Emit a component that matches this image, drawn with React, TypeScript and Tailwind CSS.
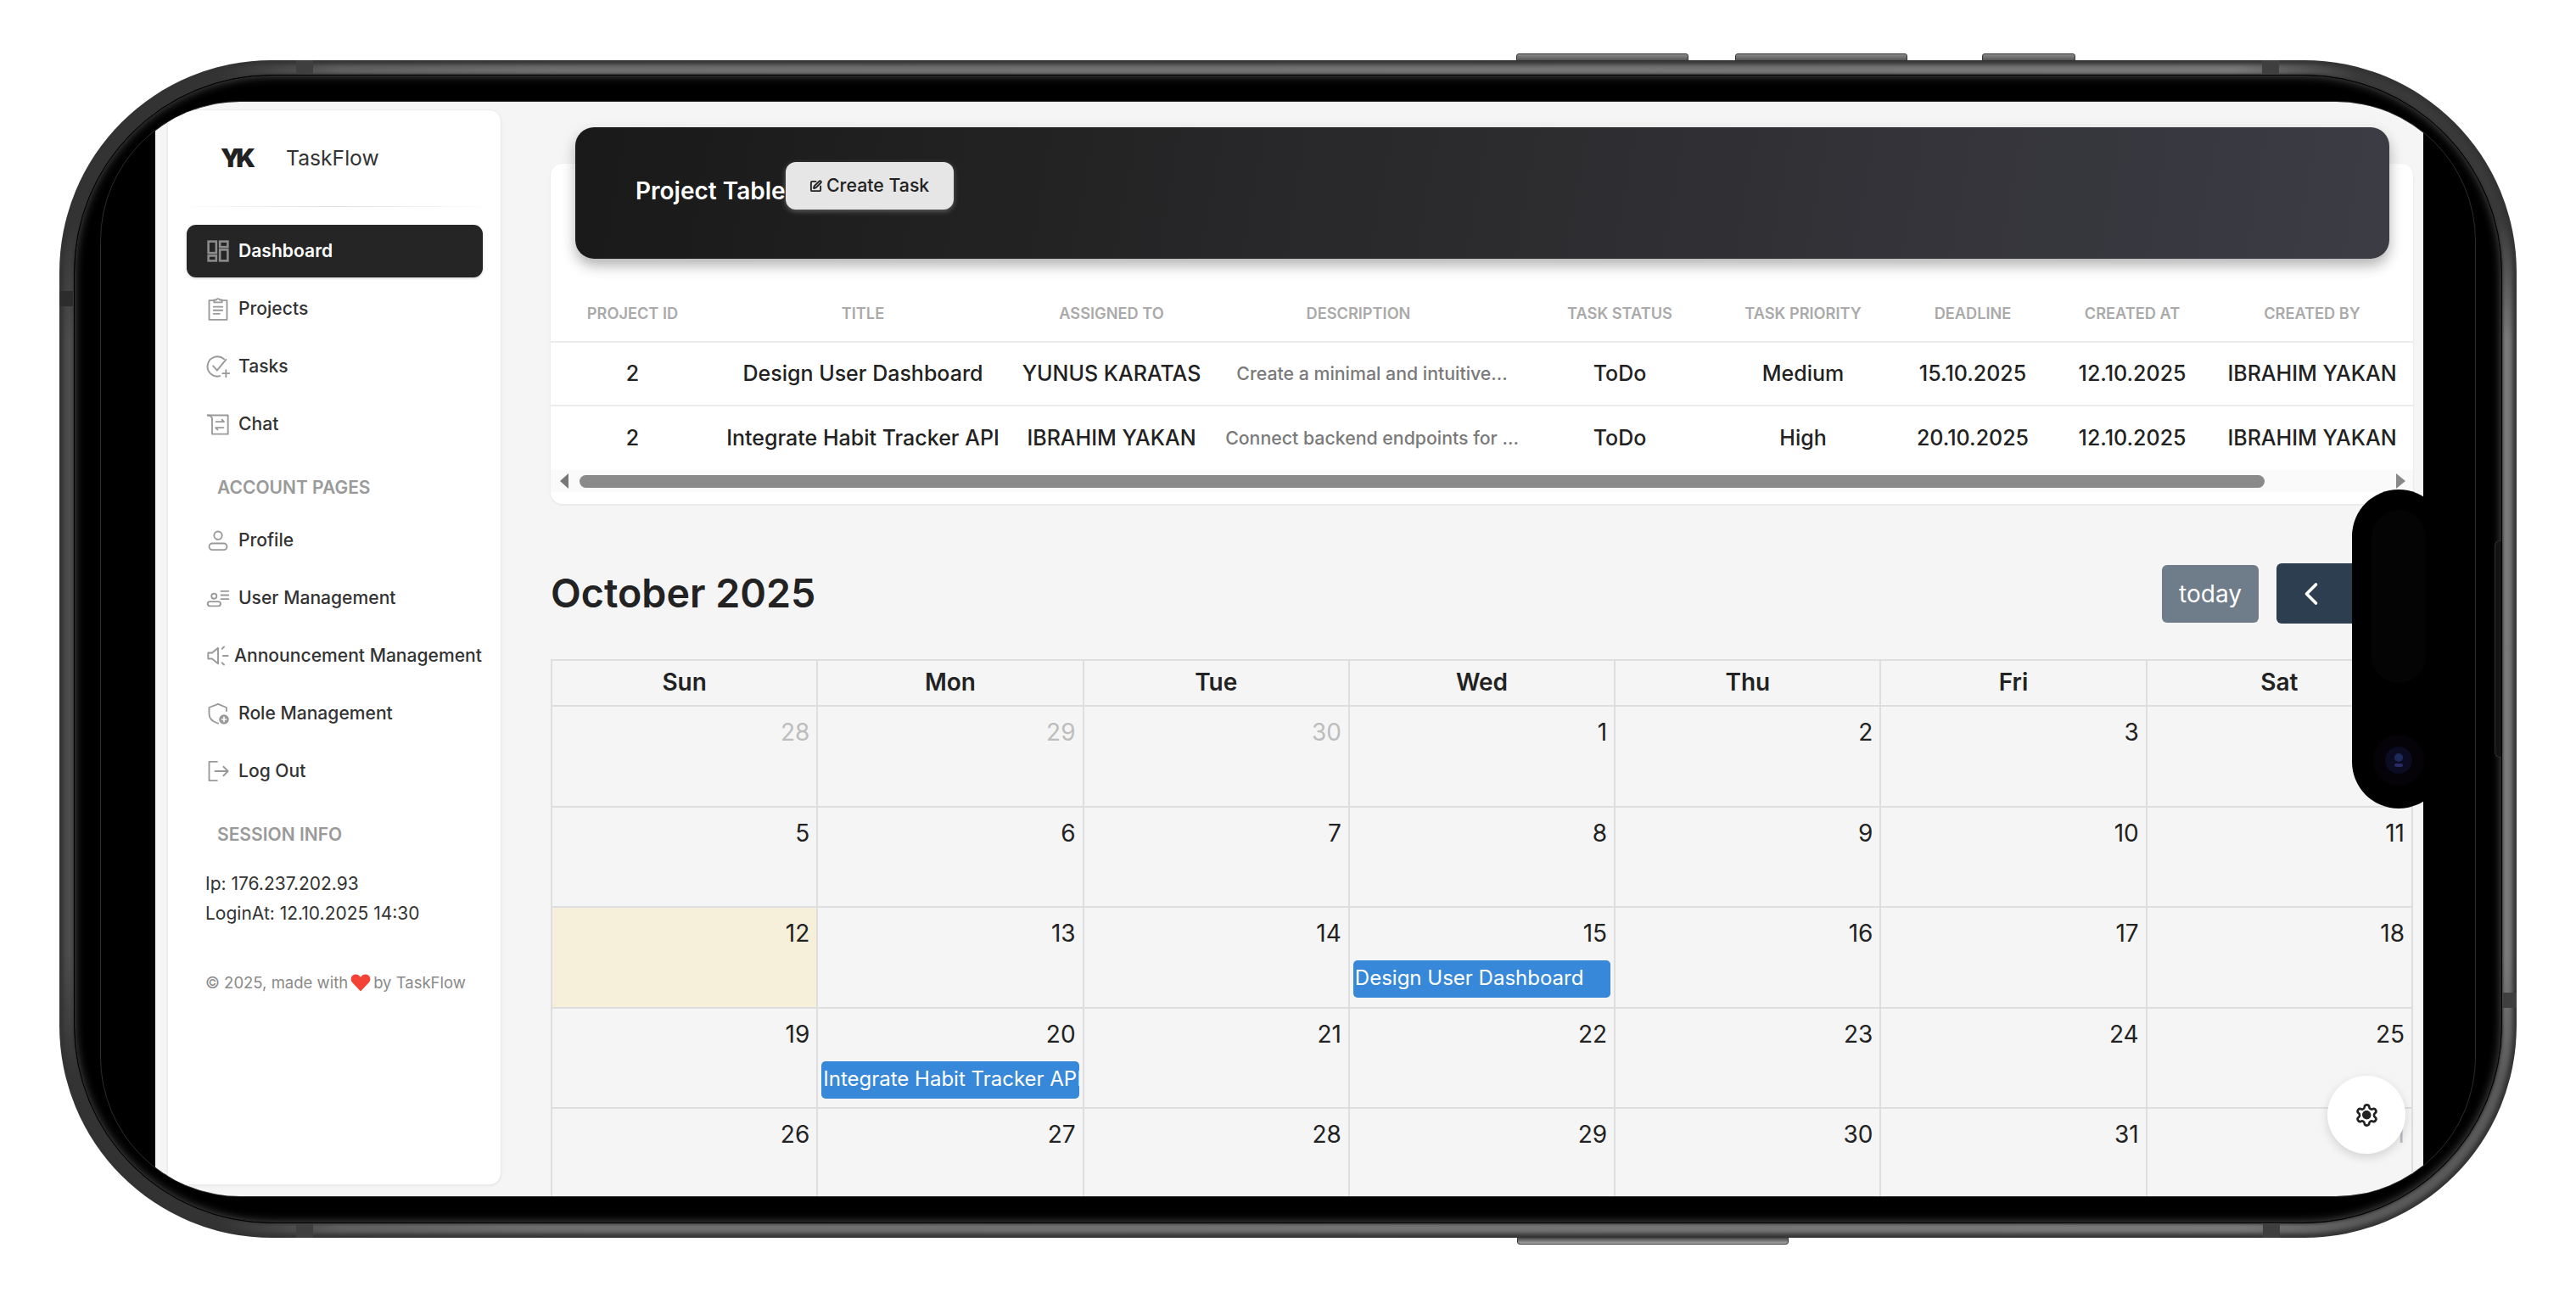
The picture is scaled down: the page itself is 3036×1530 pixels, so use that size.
import { Settings, SquarePen, ChevronLeft, ChevronRight } from "lucide-react";

const navTop = [
  { label: "Projects", icon: <ProjectsIcon /> },
  { label: "Tasks", icon: <TasksIcon /> },
  { label: "Chat", icon: <ChatIcon /> },
];

const navAccount = [
  { label: "Profile", icon: <ProfileIcon /> },
  { label: "User Management", icon: <UsersIcon /> },
  { label: "Announcement Management", icon: <MegaphoneIcon />, tight: true },
  { label: "Role Management", icon: <ShieldIcon /> },
  { label: "Log Out", icon: <LogOutIcon /> },
];

const columns = ["PROJECT ID", "TITLE", "ASSIGNED TO", "DESCRIPTION", "TASK STATUS", "TASK PRIORITY", "DEADLINE", "CREATED AT", "CREATED BY"];

const rows = [
  ["2", "Design User Dashboard", "YUNUS KARATAS", "Create a minimal and intuitive...", "ToDo", "Medium", "15.10.2025", "12.10.2025", "IBRAHIM YAKAN"],
  ["2", "Integrate Habit Tracker API", "IBRAHIM YAKAN", "Connect backend endpoints for ...", "ToDo", "High", "20.10.2025", "12.10.2025", "IBRAHIM YAKAN"],
];

const weekDays = ["Sun", "Mon", "Tue", "Wed", "Thu", "Fri", "Sat"];

const days = [
  28, 29, 30, 1, 2, 3, 4,
  5, 6, 7, 8, 9, 10, 11,
  12, 13, 14, 15, 16, 17, 18,
  19, 20, 21, 22, 23, 24, 25,
  26, 27, 28, 29, 30, 31, 1,
];

const events: Record<number, string> = {
  17: "Design User Dashboard",
  22: "Integrate Habit Tracker API",
};

function Svg({ children }: any) {
  return (
    <svg viewBox="0 0 24 24" fill="none" stroke="currentColor" strokeWidth="1.6" strokeLinecap="round" strokeLinejoin="round" className="w-[28px] h-[28px]">
      {children}
    </svg>
  );
}

function DashboardIcon() {
  return (
    <svg viewBox="0 0 24 24" fill="none" stroke="currentColor" strokeWidth="2.400" className="w-[26px] h-[26px]">
      <rect x="1.5" y="1.5" width="8.500" height="12.500" />
      <rect x="14" y="1.5" width="8.500" height="6" />
      <rect x="1.5" y="17" width="8.500" height="5.500" />
      <rect x="14" y="10.5" width="8.500" height="12" />
    </svg>
  );
}

function ProjectsIcon() {
  return (
    <Svg>
      <path d="M8 3.500H3v19.500h18V3.500H16" />
      <path d="M8 5.500V3h2.200a2 2 0 0 1 3.600 0H16v2.500z" />
      <path d="M7.500 10h9M7.500 13.500h9M7.500 17h6" />
    </Svg>
  );
}

function TasksIcon() {
  return (
    <Svg>
      <path d="M18 4.500A10 10 0 1 0 14 21.600" />
      <path d="M7 11.500l4 4.500 9-11" />
      <path d="M20 15.500v7M16.500 19h7" />
    </Svg>
  );
}

function ChatIcon() {
  return (
    <Svg>
      <path d="M1.500 3h20.500v19H6V6.500" />
      <path d="M1.500 3c2 0 4 1 4.500 3.500" />
      <path d="M10 9.500h8l-2-2M17.500 15.500h-8l2 2" />
    </Svg>
  );
}

function ProfileIcon() {
  return (
    <Svg>
      <circle cx="12" cy="7" r="4" />
      <rect x="3" y="15" width="18" height="6.500" rx="3.250" />
    </Svg>
  );
}

function UsersIcon() {
  return (
    <Svg>
      <circle cx="8" cy="10" r="2.600" />
      <rect x="1.500" y="15.500" width="13" height="4.500" rx="2.200" />
      <path d="M15 5h7.500M15 9h7.500M15 13h7.500" />
    </Svg>
  );
}

function MegaphoneIcon() {
  return (
    <Svg>
      <path d="M2 9v6h4l6 5V4L6 9z" />
      <path d="M16 5l2-2M17 12h5M16 19l2 2" />
    </Svg>
  );
}

function ShieldIcon() {
  return (
    <Svg>
      <path d="M12 2.500L3 6v6.500c0 5 4 8 9 9.500" />
      <path d="M12 2.500L20.500 6v3.500" />
      <circle cx="18" cy="18" r="5" fill="currentColor" stroke="none" />
      <path d="M15.800 18h4.400M18 15.800v4.400" stroke="#fff" strokeWidth="1.400" />
    </Svg>
  );
}

function LogOutIcon() {
  return (
    <Svg>
      <path d="M11 2.500H3v19h8" />
      <path d="M9 12h13M17.500 7.500L22 12l-4.500 4.500" />
    </Svg>
  );
}

function NavItem({ label, icon, tight }: any) {
  return (
    <div className="h-[62px] flex items-center pl-[23px] text-[#333] text-[21.100px] font-medium">
      <span className="text-[#999] w-[28px] shrink-0 flex justify-center">{icon}</span>
      <span className={tight ? "ml-[5px] whitespace-nowrap" : "ml-[10px] whitespace-nowrap"}>{label}</span>
    </div>
  );
}

function Sidebar() {
  return (
    <aside className="w-[394px] h-[1268px] mt-[9px] ml-[14px] shrink-0 bg-white rounded-[14px] border border-[#ebebeb] shadow-[0_1px_3px_rgba(0,0,0,0.06)] flex flex-col">
      <div className="h-[113px] flex items-center pl-[62px] shrink-0">
        <span className="w-[77px] font-black text-[30px] tracking-[-5px] text-[#222]">YK</span>
        <span className="text-[24.700px] text-[#333]">TaskFlow</span>
      </div>
      <div className="h-px mx-[10px] bg-gradient-to-r from-transparent via-[#dedede] to-transparent shrink-0" />
      <nav className="ml-[22px] mr-[21px] mt-[21px]">
        <div className="h-[62px] flex items-center pl-[23px] rounded-[11px] bg-[#252525] text-white text-[21.100px] font-semibold shadow-[0_1px_3px_rgba(0,0,0,0.2)]">
          <span className="text-[#8c8c8c] w-[28px] shrink-0 flex justify-center"><DashboardIcon /></span>
          <span className="ml-[10px]">Dashboard</span>
        </div>
        <div className="flex flex-col gap-[6px] mt-[6px]">
          {navTop.map((item) => (
            <NavItem key={item.label} {...item} />
          ))}
        </div>
        <div className="h-[44px] mt-[22px] pl-[36px] flex items-center text-[21px] font-semibold text-[#9a9a9a]">ACCOUNT PAGES</div>
        <div className="flex flex-col gap-[6px] mt-[9px]">
          {navAccount.map((item) => (
            <NavItem key={item.label} {...item} />
          ))}
        </div>
      </nav>
      <div className="h-[44px] mt-[22px] pl-[58px] flex items-center text-[21px] font-semibold text-[#9a9a9a]">SESSION INFO</div>
      <div className="pl-[44px] mt-[18px] text-[21px] leading-[35px] text-[#333]">
        <p>Ip: 176.237.202.93</p>
        <p>LoginAt: 12.10.2025 14:30</p>
      </div>
      <div className="pl-[44px] mt-[49px] flex items-center text-[18.500px] leading-[30px] text-[#8a8a8a] whitespace-nowrap">
        <span>© 2025, made with</span>
        <svg viewBox="0 0 24 24" className="w-[24px] h-[24px] mx-[3px]" fill="#f44336">
          <path d="M12 22.500L2.300 12.300C-.3 9.500.2 5 3.300 3.200c3-1.700 6.500-.6 8.700 2.500 2.200-3.100 5.700-4.200 8.700-2.500 3.100 1.800 3.600 6.300 1 9.100z" />
        </svg>
        <span>by TaskFlow</span>
      </div>
    </aside>
  );
}

const gridCols = "grid grid-cols-[193px_350px_236px_378px_206px_226px_174px_202px_222px]";

function ProjectTable() {
  return (
    <section className="relative bg-white rounded-[14px] h-[401px] shadow-[0_1px_3px_rgba(0,0,0,0.08)] flex flex-col">
      <div className="relative -mt-[43px] ml-[29px] mr-[28px] h-[155px] shrink-0 rounded-[22px] bg-[linear-gradient(100deg,#191919_0%,#2a2a2c_45%,#3c3c45_100%)] shadow-[0_8px_16px_rgba(0,0,0,0.3)] flex items-start pl-[71px]">
        <h2 className="mt-[60px] text-[28px] leading-[30px] font-semibold text-white whitespace-nowrap">Project Table</h2>
        <button className="mt-[41px] w-[198px] h-[56px] rounded-[12px] bg-[#e6e6e6] text-[#222] text-[21.300px] font-medium flex items-center justify-center gap-[5px] shadow-[0_2px_6px_rgba(255,255,255,0.3)]">
          <SquarePen className="w-[15px] h-[15px]" strokeWidth={3} />
          Create Task
        </button>
      </div>
      <div className={`${gridCols} h-[99px] items-start pt-[52px] border-b-2 border-[#ececec] text-[18.200px] leading-[24px] font-semibold text-[#aaa] text-center`}>
        {columns.map((c) => (
          <div key={c} className={c === "DESCRIPTION" ? "pr-[32px]" : ""}>{c}</div>
        ))}
      </div>
      {rows.map((row, i) => (
        <div key={i} className={`${gridCols} h-[75px] items-center ${i === 0 ? "border-b-2 border-[#ececec]" : ""} text-center text-[25px] font-medium text-[#222]`}>
          {row.map((cell, j) => (
            <div key={j} className={j === 3 ? "text-[21.300px] text-[#7a7a7a] whitespace-nowrap" : "whitespace-nowrap"}>{cell}</div>
          ))}
        </div>
      ))}
      <div className="h-[26px] bg-[#fafafa] flex items-center">
        <span className="ml-[11px] w-0 h-0 border-y-[9px] border-y-transparent border-r-[10px] border-r-[#777]" />
        <span className="ml-[13px] w-[1986px] h-[15px] rounded-full bg-[#8a8a8a]" />
        <span className="ml-auto mr-[9px] w-0 h-0 border-y-[9px] border-y-transparent border-l-[11px] border-l-[#888]" />
      </div>
    </section>
  );
}

function Calendar() {
  return (
    <section className="mt-[70px]">
      <div className="h-[71px] flex items-center justify-between">
        <h2 className="text-[46.600px] font-semibold text-[#222]">October 2025</h2>
        <div className="flex items-center">
          <button className="w-[114px] h-[68px] rounded-[6px] bg-[#6f7d8a] text-white text-[28px]">today</button>
          <div className="ml-[21px] flex rounded-[6px] overflow-hidden bg-[#2c3e50] text-white">
            <button className="w-[81px] h-[71px] flex items-center justify-center"><ChevronLeft className="w-[44px] h-[44px]" strokeWidth={2} /></button>
            <button className="w-[80px] h-[71px] flex items-center justify-center"><ChevronRight className="w-[44px] h-[44px]" strokeWidth={2} /></button>
          </div>
        </div>
      </div>
      <div className="mt-[42px] border-l-2 border-t-2 border-[#dedede]">
        <div className="grid grid-cols-7 h-[54px]">
          {weekDays.map((d) => (
            <div key={d} className="border-r-2 border-b-2 border-[#dedede] flex items-center justify-center pb-[3px] text-[28px] font-semibold text-[#222]">{d}</div>
          ))}
        </div>
        <div className="grid grid-cols-7">
          {days.map((d, i) => (
            <div key={i} className={`h-[118.500px] border-r-2 border-b-2 border-[#dedede] ${i === 14 ? "bg-[#f6f0da]" : ""}`}>
              <div className={`h-[48px] pt-[12px] pr-[8px] text-right text-[28px] leading-[36px] ${i < 3 || i === 34 ? "text-[#bdbdbd]" : "text-[#222]"}`}>{d}</div>
              {events[i] && (
                <div className="mt-[14px] mx-[4px] h-[44px] rounded-[5px] bg-[#3788d8] text-white text-[24px] leading-[42px] px-[2px] overflow-hidden whitespace-nowrap">{events[i]}</div>
              )}
            </div>
          ))}
        </div>
      </div>
    </section>
  );
}

export default function App() {
  return (
    <div className="w-[3036px] h-[1530px] bg-white overflow-hidden pl-[70px] pt-[71px] font-['Inter',sans-serif]">
      {/* phone body */}
      <div className="relative w-[2896px] h-[1388px] rounded-[250px] p-[17px] bg-[radial-gradient(circle_at_0_0,#343434_0,#343434_190px,transparent_330px),radial-gradient(circle_at_0_100%,#343434_0,#343434_190px,transparent_330px),radial-gradient(circle_at_100%_0,#3a3a3a_0,#3a3a3a_190px,transparent_330px),radial-gradient(circle_at_100%_100%,#5a5a5a_0,#5a5a5a_190px,transparent_330px),linear-gradient(90deg,#4c4c4c_0%,#6e6e6e_20%,#7a7a7a_100%)] shadow-[inset_0_0_5px_5px_#333]">
        {/* side buttons */}
        <div className="absolute -top-[8px] left-[1717px] w-[203px] h-[9px] rounded-t-[3px] border border-[#333] bg-[linear-gradient(180deg,#8a8a8a,#555)]" />
        <div className="absolute -top-[8px] left-[1975px] w-[203px] h-[9px] rounded-t-[3px] border border-[#333] bg-[linear-gradient(180deg,#8a8a8a,#555)]" />
        <div className="absolute -top-[8px] left-[2266px] w-[110px] h-[9px] rounded-t-[3px] border border-[#333] bg-[linear-gradient(180deg,#8a8a8a,#555)]" />
        <div className="absolute -bottom-[8px] left-[1718px] w-[320px] h-[9px] rounded-b-[3px] border border-[#333] bg-[linear-gradient(0deg,#aaa,#444)]" />
        {/* antenna bands */}
        <div className="absolute top-0 left-[279px] w-[20px] h-[16px] bg-[#3f3f3f]" />
        <div className="absolute bottom-0 left-[279px] w-[20px] h-[16px] bg-[#3f3f3f]" />
        <div className="absolute top-0 left-[2596px] w-[20px] h-[16px] bg-[#3f3f3f]" />
        <div className="absolute bottom-0 left-[2597px] w-[20px] h-[16px] bg-[#3f3f3f]" />
        <div className="absolute left-0 top-[272px] w-[16px] h-[18px] bg-[#2c2c2c]" />
        <div className="absolute right-0 top-[1099px] w-[16px] h-[18px] bg-[#3f3f3f]" />

        {/* bezel */}
        <div className="w-full h-full rounded-[233px] bg-black p-[30px] border border-black shadow-[0_0_3px_1px_#333,inset_0_0_12px_rgba(100,100,100,0.85)]">
          {/* screen */}
          <div className="w-full h-full rounded-[165px] bg-black border border-[#2c2c2c] overflow-hidden pl-[64px] pr-[61px]">
            <div className="w-full h-full bg-[#f5f5f5] flex overflow-hidden">
              <Sidebar />
              <main className="ml-[58px] w-[2195px] shrink-0 pt-[73px]">
                <ProjectTable />
                <Calendar />
              </main>
            </div>
          </div>
        </div>

        {/* power button edge */}
        <div className="absolute left-[2870px] top-[566px] w-[8px] h-[256px] rounded-l-[6px] border-l border-y border-[#2e2e2e] bg-[#141414]" />

        {/* settings button */}
        <button className="absolute left-[2673px] top-[1197px] w-[92px] h-[92px] rounded-full bg-white shadow-[0_4px_12px_rgba(0,0,0,0.14)] flex items-center justify-center text-[#222]">
          <Settings className="w-[29px] h-[29px]" strokeWidth={2.2} fill="none" />
          <span className="absolute w-[10px] h-[10px] rounded-full bg-[#222]" />
        </button>

        {/* dynamic island */}
        <div className="absolute left-[2702px] top-[506px] w-[110px] h-[376px] rounded-[55px] bg-black">
          <div className="mx-auto mt-[24px] w-[64px] h-[204px] rounded-[32px] bg-[#040404]" />
          <div className="mx-auto mt-[61px] w-[60px] h-[60px] rounded-full bg-[#050208] flex items-center justify-center">
            <div className="w-[32px] h-[32px] rounded-full bg-[#0b0b22] flex flex-col items-center justify-center gap-[2px]">
              <span className="w-[10px] h-[10px] rounded-full bg-[#1c2a5a]" />
              <span className="w-[10px] h-[4px] rounded-full bg-[#2a2a66]" />
            </div>
          </div>
        </div>
      </div>
    </div>
  );
}
